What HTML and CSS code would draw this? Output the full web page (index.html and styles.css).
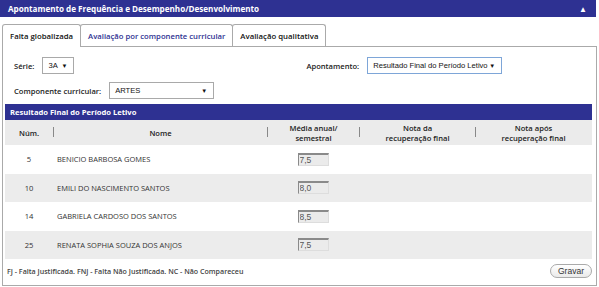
FILE: index.html
```html
<!DOCTYPE html>
<html lang="pt-BR">
<head>
  <meta charset="UTF-8">
  <title>Apontamento de Frequência e Desempenho/Desenvolvimento</title>
  <link rel="stylesheet" href="styles.css">
</head>
<body>

  <!-- Widget -->
  <div class="widget">
    <div class="widget-head">
      <span>Apontamento de Frequência e Desempenho/Desenvolvimento</span>
      <span class="collapse">&#9650;</span>
    </div>

    <!-- Tabs -->
    <ul class="tabs">
      <li class="tab active">Falta globalizada</li>
      <li class="tab link">Avaliação por componente curricular</li>
      <li class="tab">Avaliação qualitativa</li>
    </ul>

    <div class="panel">
      <div class="filters">
        <div class="field">
          <label>Série:</label>
          <div class="select serie"><span>3A</span><span class="arrow">&#9660;</span></div>
        </div>
        <div class="field apont">
          <label>Apontamento:</label>
          <div class="select focus periodo"><span>Resultado Final do Período Letivo</span><span class="arrow">&#9660;</span></div>
        </div>
      </div>
      <div class="filters">
        <div class="field">
          <label>Componente curricular:</label>
          <div class="select componente"><span>ARTES</span><span class="arrow">&#9660;</span></div>
        </div>
      </div>

      <!-- Resultado -->
      <div class="result">
        <div class="result-head">Resultado Final do Período Letivo</div>
        <div class="grid thead">
          <div>Núm.</div>
          <div class="sep">Nome</div>
          <div class="sep">Média anual/<br>semestral</div>
          <div class="sep">Nota da<br>recuperação final</div>
          <div class="sep">Nota após<br>recuperação final</div>
        </div>
        <div class="grid row">
          <div class="num">5</div>
          <div class="name">BENICIO BARBOSA GOMES</div>
          <div class="nota"><input type="text" value="7,5" readonly></div>
          <div></div><div></div>
        </div>
        <div class="grid row alt">
          <div class="num">10</div>
          <div class="name">EMILI DO NASCIMENTO SANTOS</div>
          <div class="nota"><input type="text" value="8,0" readonly></div>
          <div></div><div></div>
        </div>
        <div class="grid row">
          <div class="num">14</div>
          <div class="name">GABRIELA CARDOSO DOS SANTOS</div>
          <div class="nota"><input type="text" value="8,5" readonly></div>
          <div></div><div></div>
        </div>
        <div class="grid row alt">
          <div class="num">25</div>
          <div class="name">RENATA SOPHIA SOUZA DOS ANJOS</div>
          <div class="nota"><input type="text" value="7,5" readonly></div>
          <div></div><div></div>
        </div>
      </div>

      <div class="footer">
        <span class="legend">FJ - Falta Justificada. FNJ - Falta Não Justificada. NC - Não Compareceu</span>
        <button type="button" class="btn">Gravar</button>
      </div>
    </div>
  </div>

</body>
</html>
```

FILE: styles.css
```css
/* Reset & base */
* { margin: 0; padding: 0; box-sizing: border-box; }
body { font-family: "Open Sans", sans-serif; font-size: 7.6px; color: #333; background: #fff; }
ul { list-style: none; }

/* Widget header */
.widget { width: 597px; }
.widget-head {
  height: 17px;
  background: #2e3192;
  color: #fff;
  font-size: 8.1px;
  font-weight: 700;
  display: flex;
  justify-content: space-between;
  align-items: center;
  padding: 0 9px 0 8px;
  margin-right: 1px;
}
.collapse { font-size: 8px; }

/* Tabs */
.tabs { display: flex; margin-top: 7px; padding-left: 2px; }
.tab {
  height: 22px;
  padding: 0 7px;
  display: flex;
  align-items: center;
  border: 1px solid #aaa;
  border-bottom: none;
  border-radius: 3px 3px 0 0;
  background: #fff;
  font-size: 7.8px;
  font-weight: 600;
  color: #111;
  margin-right: -1px;
}
.tab.active { position: relative; z-index: 1; height: 23px; margin-bottom: -1px; }
.tab.link { color: #2e3192; font-size: 7.7px; }

/* Panel */
.panel {
  margin-left: 2px;
  height: 240px;
  border: 1px solid #aaa;
  padding: 10px 4px 0 2px;
}
.filters { display: flex; height: 17px; margin-bottom: 8px; padding-left: 9px; }
.filters + .filters { margin-bottom: 0; }
.field { display: flex; align-items: center; gap: 8px; }
.field label { font-weight: 600; color: #222; }
.apont { margin-left: 232px; gap: 8px; }

.select {
  height: 17px;
  border: 1px solid #a9a9a9;
  background: #fff;
  display: flex;
  align-items: center;
  justify-content: space-between;
  padding: 0 6px 0 5px;
  font-family: "Liberation Sans", Arial, sans-serif;
  font-size: 7.6px;
  color: #111;
  white-space: nowrap;
}
.select .arrow { font-size: 6px; }
.select.focus { border-color: #7ea6d8; }
.serie { width: 32px; }
.periodo { width: 135px; }
.componente { width: 105px; }

/* Result table */
.result { margin-top: 5px; }
.result-head {
  height: 16px;
  background: #2e3192;
  color: #fff;
  font-weight: 700;
  display: flex;
  align-items: center;
  padding-left: 5px;
}
.grid { display: grid; grid-template-columns: 48px 214px 92px 116px 116px; }
.thead {
  height: 25px;
  background: #ebebeb;
  font-weight: 600;
  text-align: center;
  line-height: 10px;
  color: #222;
}
.thead div { display: flex; align-items: center; justify-content: center; }
.thead .sep { border-left: 1px solid #999; }
.thead .sep { border-image: linear-gradient(#ebebeb 7px, #888 7px, #888 17px, #ebebeb 17px) 1; }

.row { height: 28.5px; align-items: center; }
.row.alt { background: #ececec; }
.num { text-align: center; }
.name { padding-left: 4px; font-size: 7.5px; }
.nota { text-align: center; }
.nota input {
  width: 31px;
  height: 13px;
  background: #ebebeb;
  border: 1px solid #ddd;
  border-top: 2px solid #8a8a8a;
  border-left: 1px solid #8a8a8a;
  font-family: "Liberation Sans", Arial, sans-serif;
  font-size: 8.5px;
  color: #555;
  padding: 0 1px;
}

/* Footer */
.footer {
  display: flex;
  justify-content: space-between;
  align-items: center;
  margin-top: 5px;
  height: 14px;
  padding-left: 2px;
}
.legend { font-weight: 600; color: #444; font-size: 7.1px; }
.btn {
  width: 42px;
  height: 14px;
  border: 1px solid #aaa;
  border-radius: 7px;
  background: linear-gradient(#fff, #eaeaea);
  font-family: "Liberation Sans", Arial, sans-serif;
  font-size: 8.5px;
  color: #333;
}
```
